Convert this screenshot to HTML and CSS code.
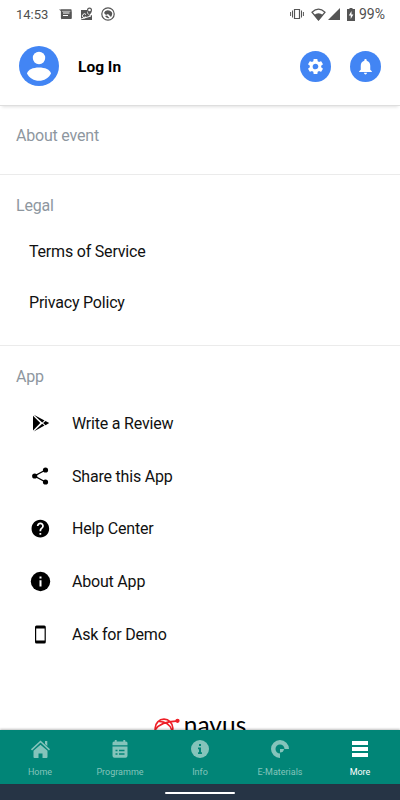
FILE: index.html
```
<!DOCTYPE html>
<html lang="en">
<head>
    <meta charset="UTF-8">
    <meta name="viewport" content="width=device-width, initial-scale=1.0">
    <title>More</title>
    <link rel="stylesheet" href="styles.css">
</head>
<body>
    <div class="screen">
        <div class="status-bar">
            <span class="time">14:53</span>
            <div class="status-left">
                <svg width="13" height="11" viewBox="0 0 13 11"><path d="M0 .5h12v1.200H1.500zM2 2.500h10.500V9H3.500L2 10.500z"/><path d="M2.500 1v8M2 1h10v8.500H3" fill="none" stroke="#555" stroke-width="1.200"/><path d="M4 4h6.500M4 6.500h5" stroke="#fff" stroke-width="1"/></svg>
                <svg width="13" height="14" viewBox="0 0 13 14"><path d="M1 3h6v3l3 3 2-1v5H1z"/><path d="M6 7.500a2 2 0 1 0 0 2.600H4.500M1 12l10-3" fill="none" stroke="#fff" stroke-width="1"/><path d="M9.500 8C7.500 5.500 7 4.500 7 3a2.500 2.500 0 0 1 5 0c0 1.500-.5 2.500-2.500 5z"/><circle cx="9.500" cy="3" r="1.300" fill="#fff"/></svg>
                <svg width="14" height="14" viewBox="0 0 14 14"><circle cx="7" cy="7" r="6.200" fill="none" stroke="#555" stroke-width="1.200"/><path d="M3 6a4 3.500 0 0 1 8 2l-1 2-3-3-2 1zM4 9l2-.5L8.500 11A4 4 0 0 1 4 9z"/></svg>
            </div>
            <div class="status-right">
                <svg width="14" height="12" viewBox="0 0 14 12"><path d="M4.500 1.500h5v9h-5z" fill="none" stroke="#555" stroke-width="1.200"/><path d="M2.500 2.500v7M.6 4v4M11.500 2.500v7M13.400 4v4" stroke="#555" stroke-width="1"/></svg>
                <svg class="wifi" width="15" height="13" viewBox="0 0 15 13"><path d="M7.500 12L1 4.200Q7.500-1.800 14 4.200z" fill="none" stroke="#555" stroke-width="1.200"/><path d="M7.500 12.500L3 7q4.500-3.500 9 0z"/></svg>
                <svg class="signal" width="12" height="12" viewBox="0 0 12 12"><path d="M12 0v12H0z"/></svg>
                <svg class="battery" width="8" height="13" viewBox="0 0 8 13"><path d="M2.500 0h3v1H8v12H0V1h2.500z"/><path d="M4.500 3L1.800 7.500h1.900V11l2.700-4.500H4.500z" fill="#fff"/></svg>
                <span>99%</span>
            </div>
        </div>

        <header class="header">
            <svg class="avatar" width="40" height="40" viewBox="0 0 40 40"><circle cx="20" cy="20" r="20"/><circle cx="20" cy="12" r="6.200" fill="#fff"/><path d="M8 27.500C9 23.500 14 21.500 20 21.500s11 2 12 6c-2 4.500-7 7.300-12 7.300S10 32 8 27.500z" fill="#fff"/></svg>
            <span class="login">Log In</span>
            <div class="round-button">
                <svg width="19" height="19" viewBox="0 0 24 24"><path d="M19.140 12.940c.04-.3.060-.61.060-.94 0-.32-.02-.64-.07-.94l2.030-1.580a.49.49 0 0 0 .12-.61l-1.920-3.320a.488.488 0 0 0-.59-.22l-2.390.96c-.5-.38-1.030-.7-1.620-.94l-.36-2.540a.484.484 0 0 0-.48-.41h-3.840c-.24 0-.43.17-.47.41l-.36 2.540c-.59.24-1.130.57-1.620.94l-2.390-.96c-.22-.08-.47 0-.59.22L2.740 8.870c-.12.210-.08.470.12.610l2.030 1.580c-.05.3-.09.630-.09.940s.02.640.07.940l-2.030 1.580a.49.49 0 0 0-.12.610l1.920 3.320c.12.220.37.290.59.220l2.390-.96c.5.380 1.030.7 1.620.94l.36 2.540c.05.240.24.410.48.410h3.840c.24 0 .44-.17.470-.41l.36-2.540c.59-.24 1.130-.56 1.620-.94l2.390.96c.22.080.47 0 .59-.22l1.920-3.320c.12-.22.070-.47-.12-.61l-2.010-1.580zM12 15.600A3.610 3.610 0 0 1 8.400 12c0-1.980 1.620-3.600 3.600-3.600s3.600 1.620 3.600 3.600-1.620 3.600-3.600 3.600z"/></svg>
            </div>
            <div class="round-button">
                <svg width="19" height="19" viewBox="0 0 24 24"><path d="M12 22c1.100 0 2-.9 2-2h-4c0 1.100.89 2 2 2zm6-6v-5c0-3.070-1.640-5.640-4.500-6.320V4c0-.83-.67-1.500-1.500-1.500s-1.500.67-1.500 1.500v.68C7.630 5.360 6 7.920 6 11v5l-2 2v1h16v-1l-2-2z"/></svg>
            </div>
        </header>

        <main class="content">
            <section class="section about">
                <h2>About event</h2>
            </section>
            <section class="section legal">
                <h2>Legal</h2>
                <div class="link">Terms of Service</div>
                <div class="link">Privacy Policy</div>
            </section>
            <section class="section app">
                <h2>App</h2>
                <div class="item">
                    <svg width="22" height="22" viewBox="0 0 22 22"><path d="M4 3.800v14.600l7.300-7.300z"/><path d="M4.800 2.700l10.700 5.900-2.300 1.800zM4.800 19.400l10.700-5.900-2.300-1.700z"/><path d="M16.500 9l3.700 2.100-3.700 2.100-2.400-2.100z"/></svg>
                    <span>Write a Review</span>
                </div>
                <div class="item">
                    <svg width="22" height="22" viewBox="0 0 22 22"><path d="M16.500 5L5.500 11l11 6" fill="none" stroke="#000" stroke-width="1.400"/><circle cx="16.500" cy="5" r="2.600"/><circle cx="5.700" cy="11" r="2.600"/><circle cx="16.500" cy="17" r="2.600"/></svg>
                    <span>Share this App</span>
                </div>
                <div class="item">
                    <svg width="22" height="22" viewBox="-.9 -.1 25 25"><path d="M12 2C6.480 2 2 6.480 2 12s4.480 10 10 10 10-4.480 10-10S17.520 2 12 2zm1 17h-2v-2h2v2zm2.070-7.750l-.9.920C13.450 12.900 13 13.500 13 15h-2v-.5c0-1.100.45-2.100 1.170-2.830l1.240-1.260c.37-.36.590-.86.590-1.410 0-1.100-.9-2-2-2s-2 .9-2 2H8c0-2.210 1.790-4 4-4s4 1.790 4 4c0 .88-.36 1.680-.93 2.250z"/></svg>
                    <span>Help Center</span>
                </div>
                <div class="item">
                    <svg width="22" height="22" viewBox="0 0 22 22"><circle cx="11.500" cy="10.500" r="9.700"/><path d="M10.500 5.500h2v2h-2zM10.500 9.300h2v6.200h-2z" fill="#fff"/></svg>
                    <span>About App</span>
                </div>
                <div class="item">
                    <svg width="22" height="22" viewBox="0 0 22 22"><path d="M7.500 1.500h7.800A1.500 1.500 0 0 1 16.800 3v15a1.500 1.500 0 0 1-1.500 1.500H7.500A1.500 1.500 0 0 1 6 18V3a1.500 1.500 0 0 1 1.500-1.500zM7.200 4.500v12h8.400v-12z"/></svg>
                    <span>Ask for Demo</span>
                </div>
            </section>
            <div class="brand">
                <svg width="27" height="20" viewBox="0 0 27 20" fill="none" stroke="#ee2028" stroke-width="1.700"><circle cx="10" cy="11" r="8.800"/><path d="M1 13C5 7 13 4.500 22 4.200M5 4.500c7 0 11 3 13 9"/><circle cx="23.500" cy="3.800" r="1.300" fill="#ee2028"/></svg>
                <span>navus</span>
            </div>
        </main>

        <nav class="tab-bar">
            <div class="tab">
                <svg width="20" height="20" viewBox="0 0 20 20"><path d="M3.500 11.800L10.500 5.800l7 6V18a1 1 0 0 1-1 1h-4v-4.500h-4V19h-4a1 1 0 0 1-1-1z"/><path d="M15 2h2.300v5L15 5z"/><path d="M1.500 10.800l9-8.300 9 8.300" fill="none" stroke="#84c4bb" stroke-width="1.600"/></svg>
                <span>Home</span>
            </div>
            <div class="tab">
                <svg width="20" height="20" viewBox="0 0 20 20"><path d="M4.800 1h1.900v1.500h6.600V1h1.900v1.500H16a1.500 1.500 0 0 1 1.500 1.500v2.200h-15V4A1.500 1.500 0 0 1 4 2.500h.8zM2.500 7.500h15v9.300a2 2 0 0 1-2 2h-11a2 2 0 0 1-2-2z"/><path d="M5.500 11.500h2M9 11.500h5.500M5.500 15h2M9 15h5.500" stroke="#018577" stroke-width="1.300"/></svg>
                <span>Programme</span>
            </div>
            <div class="tab">
                <svg width="20" height="20" viewBox="0 0 20 20"><circle cx="10" cy="10" r="9"/><path d="M9 5h2v2H9zM8 8.500h3v4.700h1V15H8v-1.800h1v-3H8z" fill="#018577"/></svg>
                <span>Info</span>
            </div>
            <div class="tab">
                <svg width="20" height="20" viewBox="0 0 20 20"><path d="M10 19a9 9 0 1 1 9-9h-4.500a4.500 4.500 0 1 0-4.500 4.500z"/><path d="M10 10h4a4 4 0 0 1-4 3.500z"/></svg>
                <span>E-Materials</span>
            </div>
            <div class="tab active">
                <svg width="20" height="20" viewBox="0 0 20 20"><path d="M2 2h16v4H2zM2 8h16v4H2zM2 14h16v4H2z"/></svg>
                <span>More</span>
            </div>
        </nav>
        <div class="gesture-bar"><div class="handle"></div></div>
    </div>
</body>
</html>
```
FILE: styles.css
```
* {
    box-sizing: border-box;
}
body {
    margin: 0;
    font-family: Roboto, sans-serif;
    font-size: 16px;
    letter-spacing: -0.2px;
    color: #111;
    background-color: #fff;
}
svg {
    display: block;
    flex-shrink: 0;
}
.screen {
    display: flex;
    flex-direction: column;
    height: 800px;
    overflow: hidden;
}
.status-bar {
    display: flex;
    align-items: center;
    height: 28px;
    flex-shrink: 0;
    padding: 0 15px 0 16px;
    font-size: 14px;
    letter-spacing: 0;
    color: #505050;
    fill: #555;
}
.time {
    width: 43px;
    font-size: 13px;
}
.status-left {
    display: flex;
    align-items: center;
    gap: 8px;
}
.status-right {
    display: flex;
    align-items: center;
    margin-left: auto;
}
.wifi {
    margin-left: 7px;
}
.signal {
    margin-left: 2px;
}
.battery {
    margin-left: 7px;
    margin-right: 4px;
}
.header {
    display: flex;
    align-items: center;
    height: 78px;
    flex-shrink: 0;
    padding: 0 19px 1px;
    border-bottom: 1px solid #dedede;
    box-shadow: 0 3px 3px -2px rgba(0, 0, 0, 0.12);
}
.avatar {
    fill: #4285f4;
}
.login {
    flex: 1;
    margin-left: 19px;
    padding-top: 1px;
    font-size: 15.500px;
    font-weight: 700;
    letter-spacing: 0;
    color: #000;
}
.round-button {
    display: flex;
    justify-content: center;
    align-items: center;
    width: 31px;
    height: 31px;
    margin-left: 20px;
    border-radius: 50%;
    background-color: #4285f4;
    fill: #fff;
}
.round-button:last-child {
    margin-left: 19px;
}
.content {
    flex: 1;
    min-height: 0;
    overflow: hidden;
}
.section {
    padding: 0 16px;
    border-bottom: 1px solid #ebebeb;
}
.section h2 {
    margin: 0;
    font-size: 16px;
    font-weight: 400;
    line-height: 20px;
    color: #8e979f;
}
.about {
    height: 69px;
    padding-top: 20px;
}
.legal {
    height: 171px;
    padding-top: 21px;
}
.link {
    height: 51px;
    line-height: 51px;
    padding-left: 13px;
}
.legal h2 {
    margin-bottom: 10px;
}
.app {
    padding-top: 21px;
    border-bottom: none;
}
.app h2 {
    margin-bottom: 10px;
}
.item {
    display: flex;
    align-items: center;
    height: 52.800px;
    padding-left: 13px;
    fill: #000;
}
.item span {
    margin-left: 21px;
}
.brand {
    display: flex;
    justify-content: center;
    align-items: flex-start;
    gap: 3px;
    margin-top: 56px;
    font-family: Lato, sans-serif;
    font-size: 24.500px;
    line-height: 15px;
    letter-spacing: 0;
    color: #000;
}
.tab-bar {
    position: relative;
    display: flex;
    height: 54px;
    flex-shrink: 0;
    background-color: #018577;
    box-shadow: 0 -1px 2px rgba(0, 0, 0, 0.25);
    fill: #84c4bb;
    color: #84c4bb;
}
.tab {
    display: flex;
    flex-direction: column;
    align-items: center;
    width: 80px;
    padding-top: 9px;
    font-size: 9px;
    line-height: 12px;
    letter-spacing: 0;
}
.tab span {
    margin-top: 7px;
}
.tab.active {
    color: #fff;
    fill: #fff;
}
.gesture-bar {
    display: flex;
    justify-content: center;
    height: 16px;
    flex-shrink: 0;
    padding-top: 8px;
    background-color: #263445;
}
.handle {
    width: 70px;
    height: 2px;
    border-radius: 1px;
    background-color: #fff;
}
```
